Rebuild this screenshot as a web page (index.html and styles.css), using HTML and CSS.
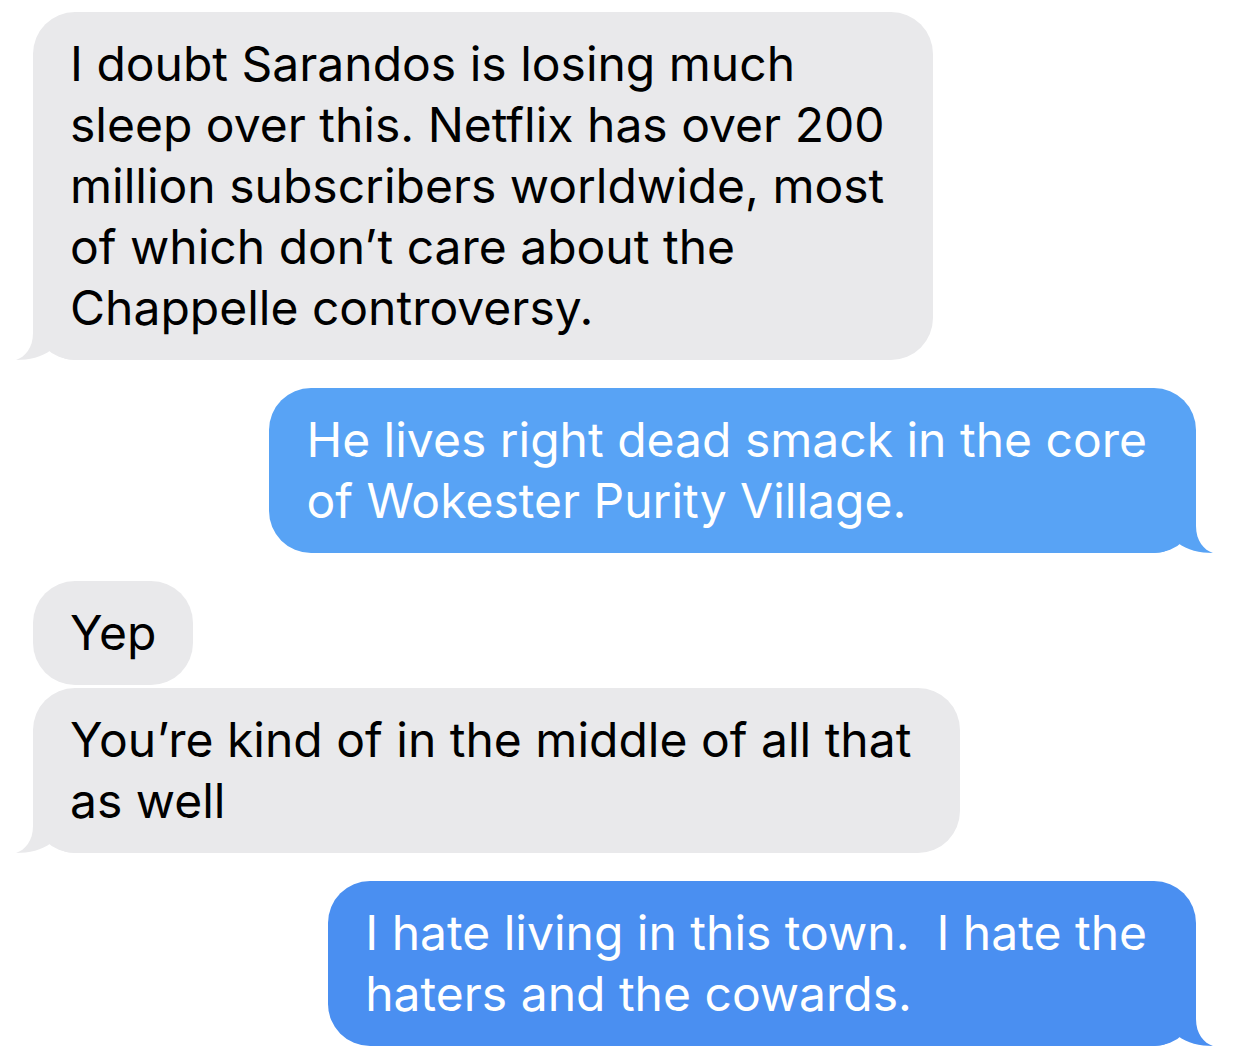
FILE: index.html
```html
<!DOCTYPE html>
<html>
  <head>
    <meta charset="utf-8" />
    <title>Messages</title>
    <link rel="stylesheet" href="styles.css">
  </head>
  <body>
    <div class="thread">
      <div class="msg msg-in tail">
        <svg class="tail-svg" viewBox="0 0 60 45"><path d="M17,0 L17,18 C17,33 9,42 0,45 C13,45 26,42 35,35 C43,42 50,45 60,45 L60,0 Z" /></svg>
        <p>I doubt Sarandos is losing much<br>sleep over this. Netflix has over 200<br>million subscribers worldwide, most<br>of which don’t care about the<br>Chappelle controversy.</p>
      </div>

      <div class="msg msg-out out-1 tail">
        <svg class="tail-svg" viewBox="0 0 60 45"><path d="M17,0 L17,18 C17,33 9,42 0,45 C13,45 26,42 35,35 C43,42 50,45 60,45 L60,0 Z" /></svg>
        <p>He lives right dead smack in the core<br>of Wokester Purity Village.</p>
      </div>

      <div class="msg msg-in grouped">
        <p>Yep</p>
      </div>
      <div class="msg msg-in tail">
        <svg class="tail-svg" viewBox="0 0 60 45"><path d="M17,0 L17,18 C17,33 9,42 0,45 C13,45 26,42 35,35 C43,42 50,45 60,45 L60,0 Z" /></svg>
        <p>You’re kind of in the middle of all that<br>as well</p>
      </div>

      <div class="msg msg-out out-2 tail">
        <svg class="tail-svg" viewBox="0 0 60 45"><path d="M17,0 L17,18 C17,33 9,42 0,45 C13,45 26,42 35,35 C43,42 50,45 60,45 L60,0 Z" /></svg>
        <p>I hate living in this town.&nbsp; I hate the<br>haters and the cowards.</p>
      </div>
    </div>
  </body>
</html>
```

FILE: styles.css
```css
html,
body {
  margin: 0;
  background: #fff;
}
.thread {
  display: flex;
  flex-direction: column;
  padding: 12px 45px 0 33px;
  font-family: "Inter", "Liberation Sans", sans-serif;
}
.msg {
  position: relative;
  border-radius: 42px;
  padding: 21px 49px 22px 37px;
  margin-bottom: 28px;
  width: fit-content;
}
.msg.grouped {
  margin-bottom: 3px;
  padding-right: 37px;
}
.msg p {
  position: relative;
  margin: 0;
  font-size: 48px;
  line-height: 61px;
  letter-spacing: 0;
  white-space: nowrap;
}
.msg-in {
  align-self: flex-start;
  background: #e9e9eb;
  color: #000;
}
.msg-out {
  align-self: flex-end;
  color: #fff;
}
.out-1 {
  background: #58a3f5;
}
.out-2 {
  background: #4a8ff1;
}
.tail-svg {
  position: absolute;
  bottom: 0;
  width: 60px;
  height: 45px;
}
.msg-in .tail-svg {
  left: -17px;
  fill: #e9e9eb;
}
.msg-out .tail-svg {
  right: -17px;
  transform: scaleX(-1);
}
.out-1 .tail-svg {
  fill: #58a3f5;
}
.out-2 .tail-svg {
  fill: #4a8ff1;
}
```
